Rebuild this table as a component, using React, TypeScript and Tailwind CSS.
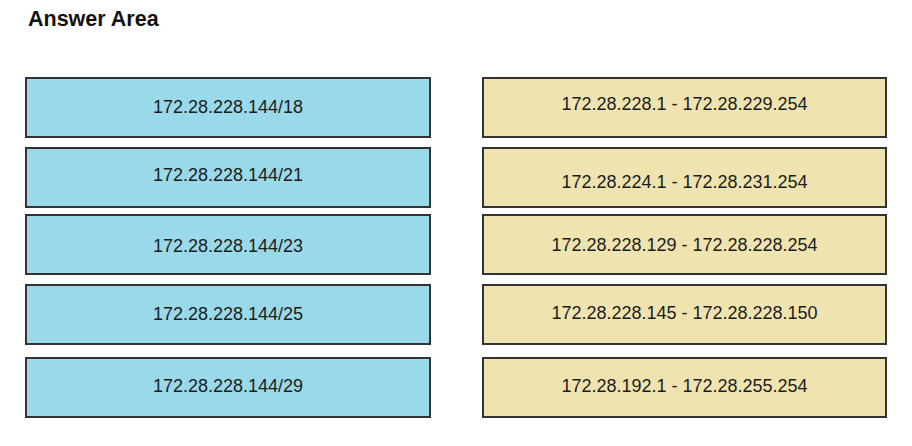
const rows = [
  { left: '172.28.228.144/18', right: '172.28.228.1 - 172.28.229.254', mt: 'mt-0', lOff: 'pt-0', rOff: 'pb-[6px]' },
  { left: '172.28.228.144/21', right: '172.28.224.1 - 172.28.231.254', mt: 'mt-[9px]', lOff: 'pb-[5px]', rOff: 'pt-[9px]' },
  { left: '172.28.228.144/23', right: '172.28.228.129 - 172.28.228.254', mt: 'mt-[6px]', lOff: 'pt-[3px]', rOff: 'pt-[1px]' },
  { left: '172.28.228.144/25', right: '172.28.228.145 - 172.28.228.150', mt: 'mt-[9px]', lOff: 'pt-0', rOff: 'pb-[3px]' },
  { left: '172.28.228.144/29', right: '172.28.192.1 - 172.28.255.254', mt: 'mt-[12px]', lOff: 'pb-[3px]', rOff: 'pb-[3px]' },
];

export default function App() {
  return (
    <div className="w-[912px] h-[446px] bg-white pl-[25px] pt-[7px] font-['Liberation_Sans',Arial,sans-serif] text-[#1c1c1c]">
      <h1 className="pl-[3px] text-[21.5px] leading-[24px] font-bold text-[#111]">Answer Area</h1>
      <div className="mt-[46px] flex flex-col">
        {rows.map((row) => (
          <div key={row.left} className={`flex gap-[51px] ${row.mt}`}>
            <div
              className={`flex h-[61px] w-[406px] items-center justify-center border-2 border-[#333] bg-[#99d9ea] text-[18px] ${row.lOff}`}
            >
              {row.left}
            </div>
            <div
              className={`flex h-[61px] w-[405px] items-center justify-center border-2 border-[#333] bg-[#efe4b0] text-[18px] ${row.rOff}`}
            >
              {row.right}
            </div>
          </div>
        ))}
      </div>
    </div>
  );
}
